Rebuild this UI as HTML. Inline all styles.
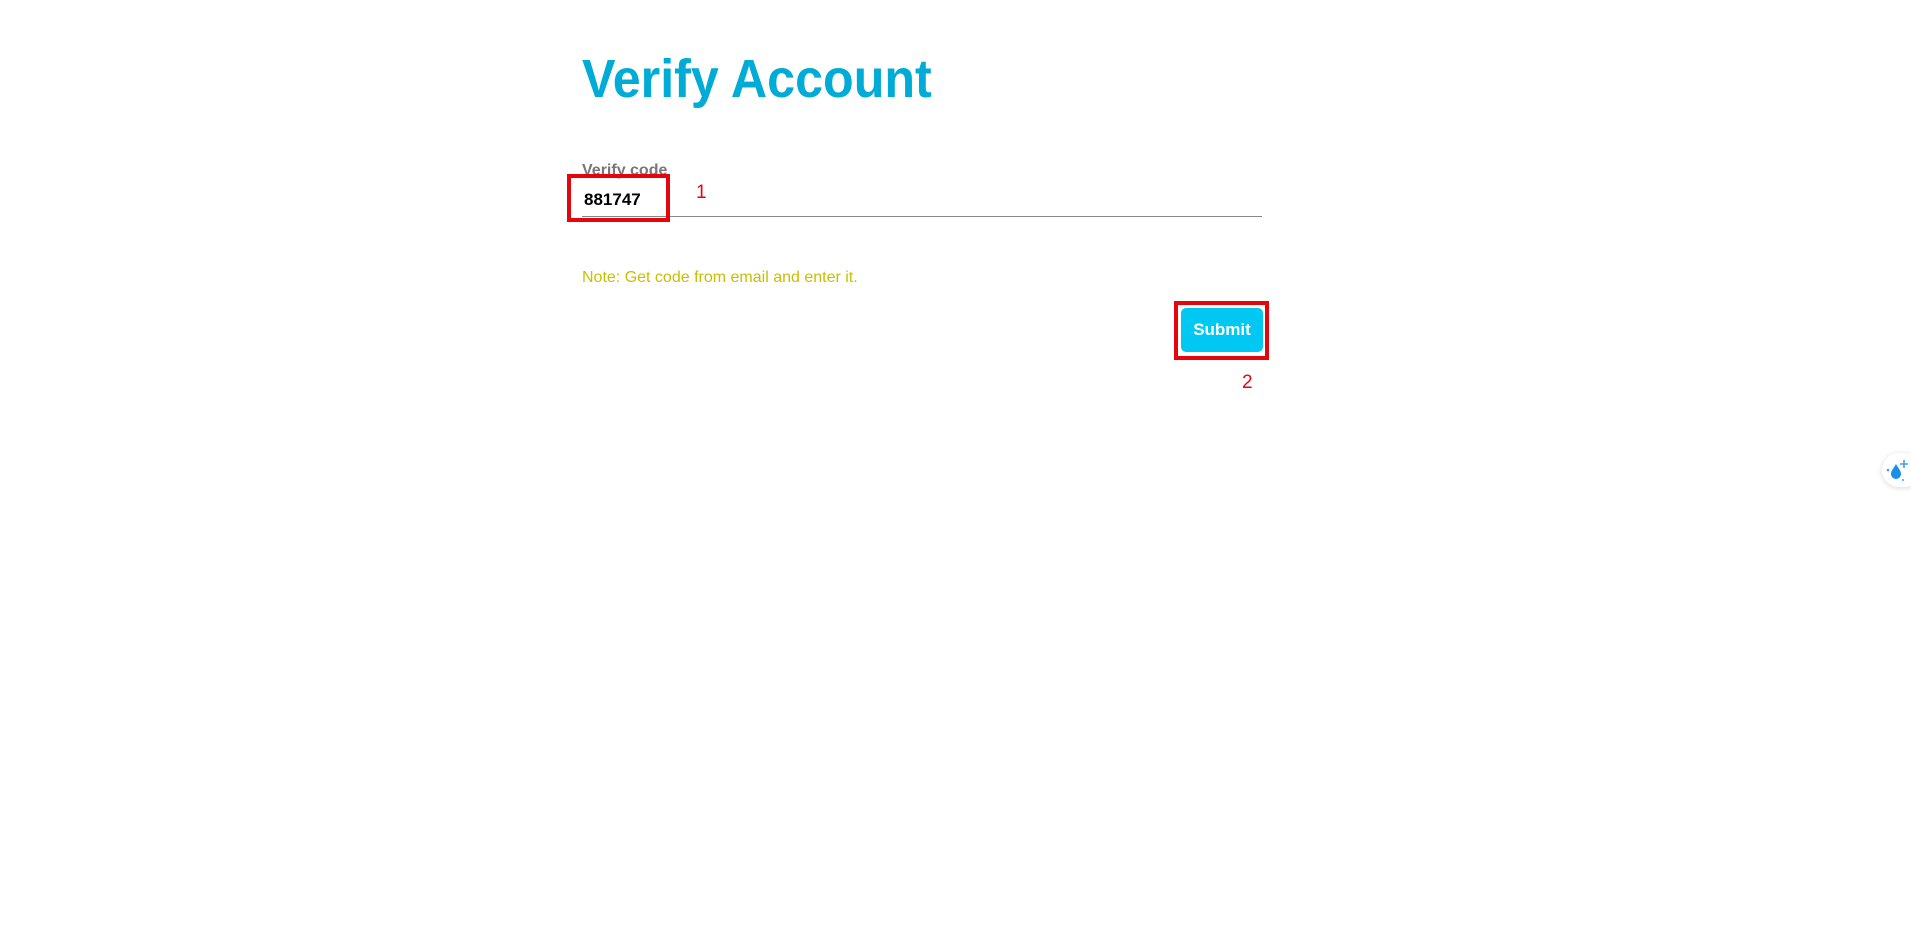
<!DOCTYPE html>
<html><head><meta charset="utf-8"><style>
body{margin:0;width:1911px;height:941px;background:#fff;position:relative;overflow:hidden;font-family:"Liberation Sans",sans-serif}
.a{position:absolute;white-space:nowrap}
</style></head><body>
<div class="a" style="left:582px;top:47px;font-size:54px;line-height:64px;color:#00acd6;font-weight:bold;transform:scaleX(0.93);transform-origin:left top">Verify Account</div>
<div class="a" style="left:582px;top:161px;font-size:16px;line-height:20px;color:#777;font-weight:bold">Verify code</div>
<div class="a" style="left:584px;top:190px;font-size:17px;line-height:20px;color:#000;font-weight:bold">881747</div>
<div class="a" style="left:582px;top:216px;width:680px;height:1px;background:#888"></div>
<div class="a" style="left:567px;top:174px;width:95px;height:40px;border:4px solid #e4060c"></div>
<div class="a" style="left:696px;top:182px;font-size:19px;line-height:22px;color:#e4060c">1</div>
<div class="a" style="left:582px;top:269px;font-size:16px;line-height:18px;color:#c9bf00">Note: Get code from email and enter it.</div>
<div class="a" style="left:1174px;top:301px;width:87px;height:51px;border:4px solid #e4060c"></div>
<div class="a" style="left:1181px;top:308px;width:82px;height:44px;background:#00c8f2;border-radius:5px;color:#fff;font-weight:bold;font-size:17px;line-height:44px;text-align:center">Submit</div>
<div class="a" style="left:1242px;top:372px;font-size:19px;line-height:22px;color:#e4060c">2</div>
<div class="a" style="left:1882px;top:453px;width:40px;height:34px;border-radius:17px;background:#fff;box-shadow:0 1px 6px rgba(0,0,0,0.15)"></div>
<svg class="a" style="left:1885px;top:458px" width="26" height="26" viewBox="0 0 26 26">
<path d="M11 6 C8 11 6 13 6 16 a5 5 0 0 0 10 0 C16 13 14 11 11 6Z" fill="#1a8fe8"/>
<circle cx="3" cy="12" r="1.3" fill="#3aa0f0"/><circle cx="18" cy="22" r="1" fill="#3aa0f0"/>
<path d="M19 2 v8 M15 6 h8" stroke="#3aa0f0" stroke-width="1.6"/>
</svg>
</body></html>
